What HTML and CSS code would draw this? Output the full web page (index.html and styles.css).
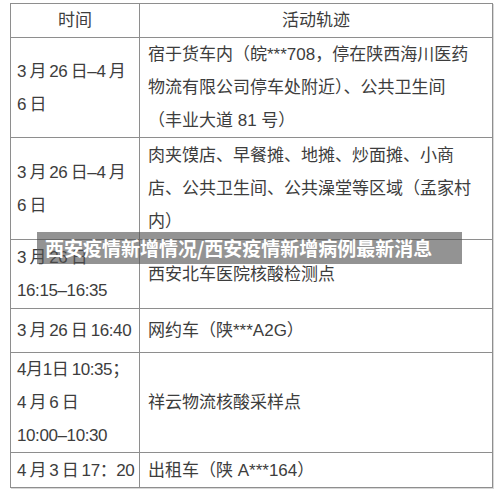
FILE: index.html
```
<!DOCTYPE html>
<html lang="zh-CN">
<head>
<meta charset="utf-8">
<title>西安疫情新增情况</title>
<link rel="stylesheet" href="styles.css">
</head>
<body>
<div class="page">
  <table class="track">
    <colgroup><col class="c-time"><col class="c-act"></colgroup>
    <tr class="r-head">
      <th>时间</th>
      <th>活动轨迹</th>
    </tr>
    <tr class="r1">
      <td class="t">3 月 26 日–4 月<br>6 日</td>
      <td class="a">宿于货车内（皖***708，停在陕西海川医药<br>物流有限公司停车处附近）、公共卫生间<br>（丰业大道 81 号）</td>
    </tr>
    <tr class="r2">
      <td class="t">3 月 26 日–4 月<br>6 日</td>
      <td class="a">肉夹馍店、早餐摊、地摊、炒面摊、小商<br>店、公共卫生间、公共澡堂等区域（孟家村<br>内）</td>
    </tr>
    <tr class="r3">
      <td class="t">3 月 26 日<br>16:15–16:35</td>
      <td class="a">西安北车医院核酸检测点</td>
    </tr>
    <tr class="r4">
      <td class="t">3 月 26 日 16:40</td>
      <td class="a">网约车（陕***A2G）</td>
    </tr>
    <tr class="r5">
      <td class="t">4月1日 10:35；<br>4 月 6 日<br>10:00–10:30</td>
      <td class="a">祥云物流核酸采样点</td>
    </tr>
    <tr class="r6">
      <td class="t">4 月 3 日 17：20</td>
      <td class="a">出租车（陕 A***164）</td>
    </tr>
  </table>
  <div class="caption">西安疫情新增情况/西安疫情新增病例最新消息</div>
</div>
</body>
</html>
```
FILE: styles.css
```
html, body {
  margin: 0;
  padding: 0;
  background: #ffffff;
}
.page {
  position: relative;
  width: 500px;
  height: 498px;
  padding: 3px 0 0 10px;
  box-sizing: border-box;
}
.track {
  border-collapse: collapse;
  table-layout: fixed;
  width: 482px;
  font-family: "Liberation Sans", "Noto Sans CJK SC", sans-serif;
  font-size: 17px;
  line-height: 33px;
  color: #3d3d3d;
  box-shadow: 1px 1px 0 #d8d8d8;
}
.c-time { width: 129px; }
.c-act { width: 353px; }
.track th, .track td {
  border: 1px solid #8e8e8e;
  vertical-align: middle;
  padding: 0;
  font-weight: 400;
}
.track th {
  text-align: center;
}
.track td.t {
  padding-left: 6px;
  white-space: nowrap;
  letter-spacing: -0.4px;
  word-spacing: -1px;
}
.track td.a {
  padding-left: 8px;
  padding-right: 10px;
}
.r-head th { height: 33px; }
.r1 td { height: 99px; }
.r2 td { height: 101px; }
.r3 td { height: 68px; }
.r4 td { height: 43px; }
.r5 td { height: 99px; }
.r6 td { height: 34px; }
.caption {
  position: absolute;
  left: 37px;
  top: 232px;
  width: 425px;
  height: 32px;
  box-sizing: border-box;
  padding-left: 8px;
  background: rgba(80, 80, 80, 0.62);
  color: #ffffff;
  font-family: "Noto Sans CJK SC", sans-serif;
  font-weight: 700;
  font-size: 19px;
  line-height: 32px;
  white-space: nowrap;
}
```
